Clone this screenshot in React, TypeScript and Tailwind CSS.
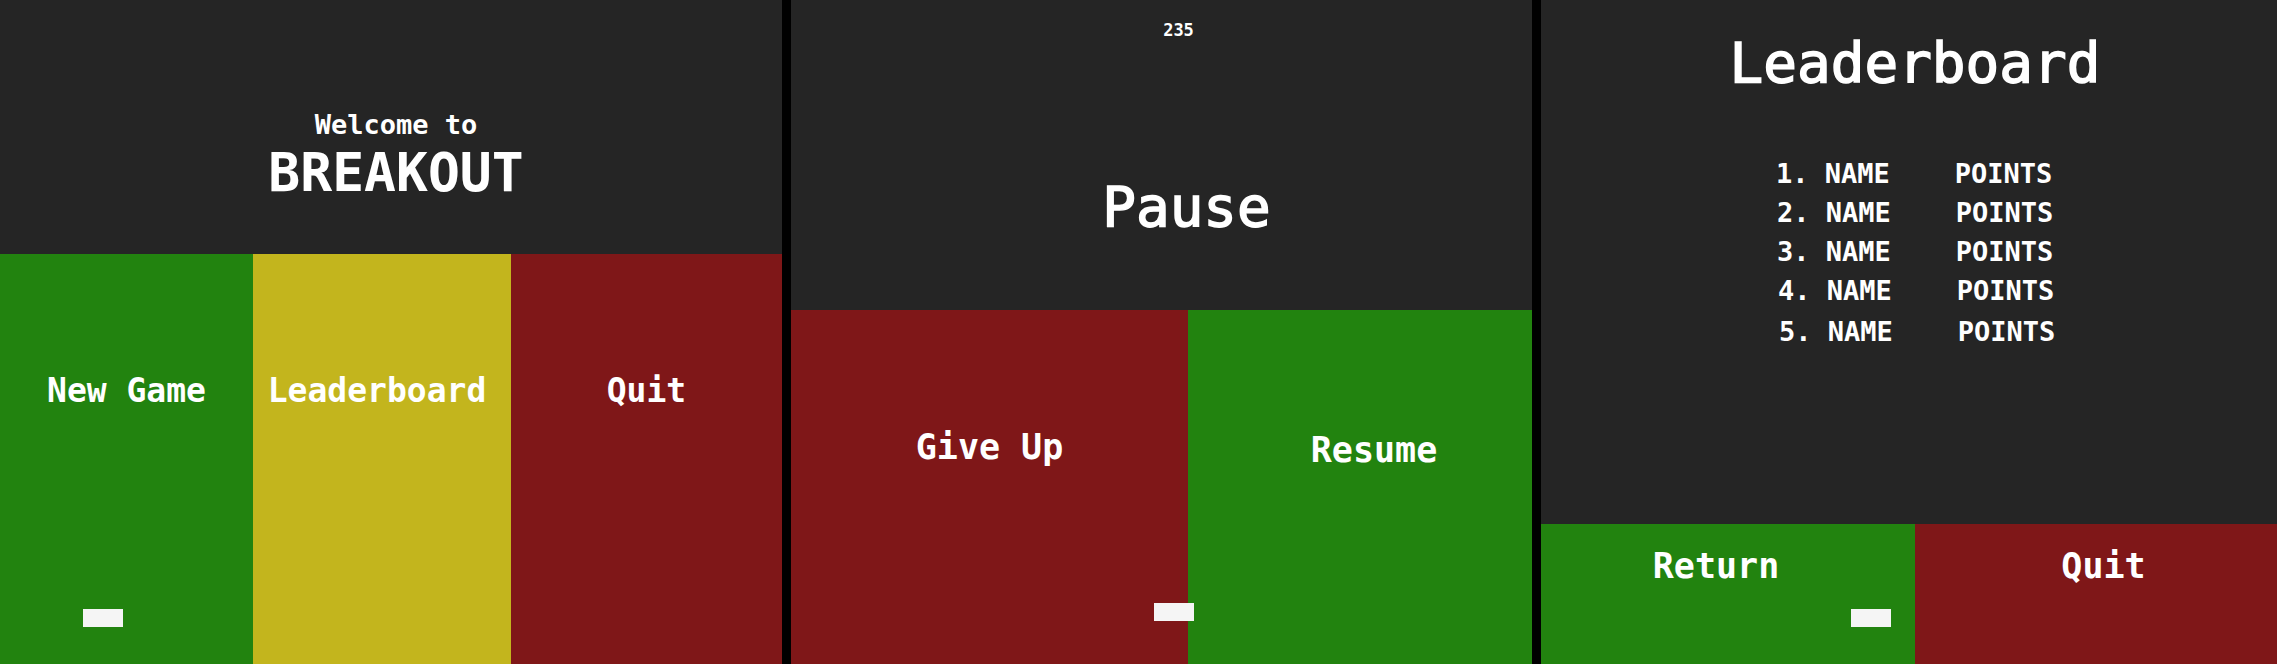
import React from 'react';

const mono = "font-['DejaVu_Sans_Mono','Liberation_Mono',monospace]";

const Paddle: React.FC<{ className: string }> = ({ className }) => (
  <div className={`absolute w-[40px] h-[18px] bg-[#f5f5f5] ${className}`} />
);

const MainMenu: React.FC = () => (
  <div className="relative w-[782px] h-full flex flex-col">
    <div className="h-[254px] bg-[#252525] flex flex-col items-center pt-[111px] pl-[10px] gap-[8px] text-white">
      <p className="text-[27px] leading-none font-bold">Welcome to</p>
      <h1 className="text-[53px] leading-none font-bold">BREAKOUT</h1>
    </div>
    <div className="flex-1 flex text-white text-[33px] leading-none font-bold">
      <button className="w-[253px] bg-[#22830f] flex justify-center items-start pt-[120px]">New Game</button>
      <button className="w-[258px] bg-[#c3b51d] flex justify-center items-start pt-[120px] pr-[10px]">Leaderboard</button>
      <button className="flex-1 bg-[#7f1718] flex justify-center items-start pt-[120px]">Quit</button>
    </div>
    <Paddle className="left-[83px] top-[609px]" />
  </div>
);

const PauseMenu: React.FC = () => (
  <div className="relative w-[741px] h-full flex flex-col">
    <div className="h-[310px] bg-[#252525] flex flex-col items-center text-white">
      <span className="mt-[22px] pl-[34px] text-[17px] leading-none font-bold">235</span>
      <h2 className="mt-[140px] pl-[50px] text-[56px] leading-none [-webkit-text-stroke:1.5px_#fff]">Pause</h2>
    </div>
    <div className="flex-1 flex text-white text-[35px] leading-none font-bold">
      <button className="w-[397px] bg-[#7f1718] flex justify-center items-start pt-[120px]">Give Up</button>
      <button className="flex-1 bg-[#22830f] flex justify-center items-start pt-[123px] pl-[28px]">Resume</button>
    </div>
    <Paddle className="left-[363px] top-[603px]" />
  </div>
);

const scores = [
  { rank: '1.', shift: '' },
  { rank: '2.', shift: 'ml-[1px]' },
  { rank: '3.', shift: 'ml-[1px]' },
  { rank: '4.', shift: 'ml-[2px]' },
  { rank: '5.', shift: 'ml-[3px] mt-[2px]' },
];

const LeaderboardScreen: React.FC = () => (
  <div className="relative flex-1 h-full flex flex-col">
    <div className="h-[524px] bg-[#252525] flex flex-col text-white">
      <h2 className="mt-[35px] pl-[12px] text-center text-[56px] leading-none [-webkit-text-stroke:1.5px_#fff]">Leaderboard</h2>
      <ol className="mt-[63px] ml-[235px] flex flex-col text-[27px] font-bold">
        {scores.map((s) => (
          <li key={s.rank} className={`h-[39px] leading-[39px] whitespace-pre ${s.shift}`}>
            {`${s.rank} NAME    POINTS`}
          </li>
        ))}
      </ol>
    </div>
    <div className="flex-1 flex text-white text-[35px] leading-none font-bold">
      <button className="w-[374px] bg-[#22830f] flex justify-center items-start pt-[25px] pr-[24px]">Return</button>
      <button className="flex-1 bg-[#7f1718] flex justify-center items-start pt-[25px] pl-[15px]">Quit</button>
    </div>
    <Paddle className="left-[310px] top-[609px]" />
  </div>
);

const App: React.FC = () => {
  return (
    <div className={`w-[2277px] h-[664px] bg-black flex gap-[9px] overflow-hidden ${mono}`}>
      <MainMenu />
      <PauseMenu />
      <LeaderboardScreen />
    </div>
  );
};

export default App;
